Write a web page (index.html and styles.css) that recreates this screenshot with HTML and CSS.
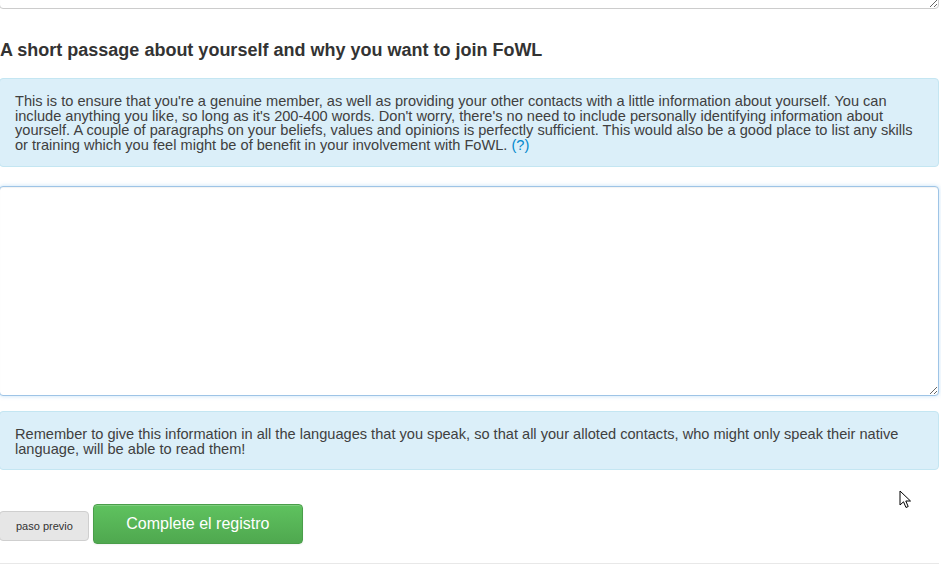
FILE: index.html
```html
<!DOCTYPE html>
<html lang="en">
<head>
    <meta charset="utf-8">
    <title>FoWL registro</title>
    <link rel="stylesheet" href="styles.css">
</head>
<body>
<div class="register">
    <textarea class="field field-prev" name="previous"></textarea>

    <h4 class="section-title">A short passage about yourself and why you want to join FoWL</h4>

    <div class="alert alert-info">
        This is to ensure that you're a genuine member, as well as providing your other contacts with a little information about yourself. You can include anything you like, so long as it's 200-400 words. Don't worry, there's no need to include personally identifying information about yourself. A couple of paragraphs on your beliefs, values and opinions is perfectly sufficient. This would also be a good place to list any skills or training which you feel might be of benefit in your involvement with FoWL. <a href="#">(?)</a>
    </div>

    <textarea class="field field-about" name="about"></textarea>

    <div class="alert alert-info">
        Remember to give this information in all the languages that you speak, so that all your alloted contacts, who might only speak their native language, will be able to read them!
    </div>

    <div class="actions">
        <button type="button" class="btn btn-small">paso previo</button>
        <button type="submit" class="btn btn-success">Complete el registro</button>
    </div>

    <hr class="divider">
</div>

<!-- puntero del ratón -->
<svg class="cursor" width="13" height="20" viewBox="0 0 13 20">
    <path d="M1 1 L1 15 L4.5 11.8 L7 17.5 L9.2 16.5 L6.8 11 L11.5 11 Z" fill="#fff" stroke="#000" stroke-width="1" stroke-linejoin="miter"/>
</svg>
</body>
</html>
```

FILE: styles.css
```css
body {
    font-family: 'Liberation Sans', Arial, sans-serif;
    margin: 0;
    padding: 0;
    background: #fff;
    color: #333;
    overflow: hidden;
}

.register {
    margin: 0 2px 0 -1px;
}

.field {
    display: block;
    box-sizing: border-box;
    width: 100%;
    margin: 0;
    padding: 6px;
    border: 1px solid #ccc;
    border-radius: 4px;
    font-family: inherit;
    font-size: 14px;
    background: #fff;
    box-shadow: inset 0 1px 1px rgba(0, 0, 0, 0.075);
    outline: none;
}

.field-prev {
    height: 60px;
    margin-top: -51px;
}

.field-about {
    height: 210px;
    margin-bottom: 15px;
    border-color: #9ec4e6;
    box-shadow: inset 0 1px 1px rgba(0, 0, 0, 0.05), 0 0 4px rgba(82, 168, 236, 0.35);
}

.section-title {
    font-size: 18px;
    line-height: 20px;
    font-weight: bold;
    color: #333;
    margin: 31px 0 18px 1px;
}

.alert {
    padding: 15px 14px 13px 15px;
    margin-bottom: 19px;
    font-size: 14.6px;
    line-height: 14.7px;
    color: #404040;
    background: #dbeff9;
    border: 1px solid #c4e6f2;
    border-radius: 4px;
}

.alert a {
    color: #0088cc;
    text-decoration: none;
}

.actions {
    display: flex;
    align-items: flex-start;
    gap: 4px;
    margin-top: 34px;
}

.btn {
    font-family: inherit;
    border-radius: 4px;
    cursor: pointer;
}

.btn-small {
    margin-top: 7px;
    padding: 6px 15px 6px 16px;
    font-size: 11px;
    line-height: 16px;
    color: #333;
    background: #e6e6e6;
    border: 1px solid #cfcfcf;
}

.btn-success {
    width: 210px;
    padding: 9px 0;
    font-size: 16px;
    line-height: 20px;
    color: #fff;
    background: linear-gradient(#5fc25f, #4fa84f);
    border: 1px solid #4a9e4a;
    box-shadow: inset 0 1px 0 rgba(255, 255, 255, 0.2), 0 1px 2px rgba(0, 0, 0, 0.05);
}

.divider {
    margin: 19px 0 0;
    border: 0;
    border-top: 1px solid #e8e8e8;
}

.cursor {
    position: absolute;
    left: 899px;
    top: 490px;
}
```
